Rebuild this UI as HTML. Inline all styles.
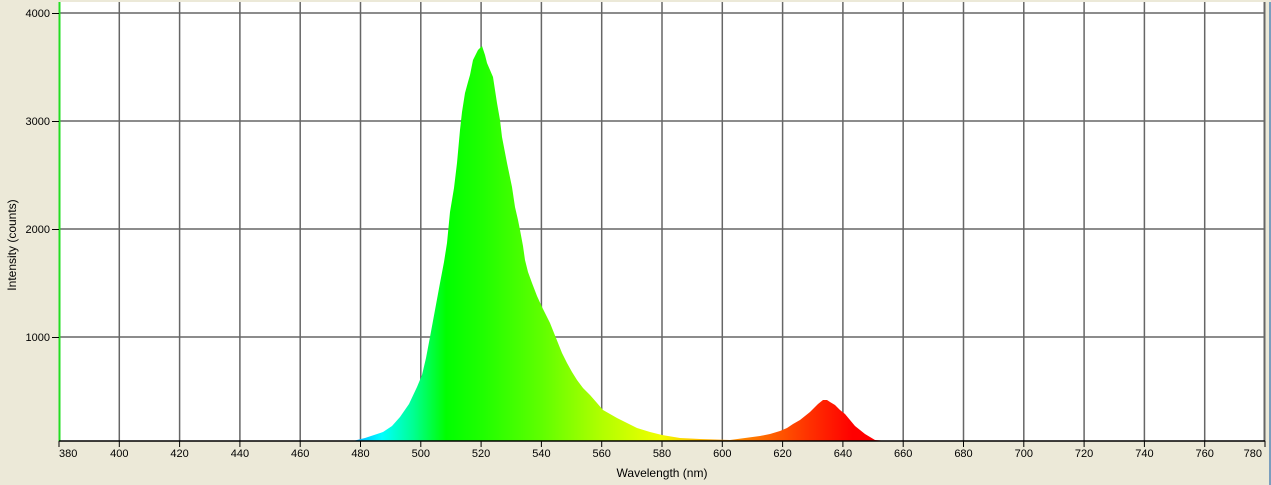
<!DOCTYPE html>
<html><head><meta charset="utf-8"><style>
html,body{margin:0;padding:0;background:#ece9d8;width:1271px;height:485px;overflow:hidden}
</style></head><body>
<svg width="1271" height="485" xmlns="http://www.w3.org/2000/svg" style="position:absolute;left:0;top:0">
<defs>
<linearGradient id="g" gradientUnits="userSpaceOnUse" x1="355" y1="0" x2="890" y2="0">
<stop offset="0" stop-color="#00b0ff"/>
<stop offset="0.05" stop-color="#00ffff"/>
<stop offset="0.11" stop-color="#00ff90"/>
<stop offset="0.17" stop-color="#00ff00"/>
<stop offset="0.24" stop-color="#20ff00"/>
<stop offset="0.35" stop-color="#60ff00"/>
<stop offset="0.46" stop-color="#b0ff00"/>
<stop offset="0.57" stop-color="#f0ff00"/>
<stop offset="0.64" stop-color="#ffc000"/>
<stop offset="0.73" stop-color="#ff8000"/>
<stop offset="0.85" stop-color="#ff3000"/>
<stop offset="0.93" stop-color="#ff0000"/>
<stop offset="1" stop-color="#ff0000"/>
</linearGradient>
</defs>
<rect x="59" y="2" width="1206" height="439" fill="#fff"/>
<g stroke="#666" stroke-width="1.5">
<line x1="59" y1="13" x2="1265" y2="13"/>
<line x1="59" y1="121" x2="1265" y2="121"/>
<line x1="59" y1="229" x2="1265" y2="229"/>
<line x1="59" y1="337" x2="1265" y2="337"/>
</g>
<g stroke="#666" stroke-width="1.5" id="vg"></g>
<polygon fill="url(#g)" points="353,441 365,438 383,432 392,426 400,417 409,404 417,387 422,375 426,358 430,337 435,310 440,283 444,262 447,243 450,212 454,188 457,163 460,130 462,112 465,93 468,82 470,75 473,60 476,54 478,50 482,46 485,55 487,63 490,70 493,77 495,90 497,103 500,120 502,137 507,163 512,187 515,207 518,220 520,230 523,246 525,260 528,272 532,283 537,296 542,307 546,315 550,323 554,333 558,343 562,353 567,363 572,372 577,380 583,388 590,395 597,403 603,410 610,414 617,418 627,423 637,428 650,432 662,435 680,438 700,439 730,440 745,438 760,436 770,434 780,431 787,428 793,424 800,420 805,416 810,412 814,408 818,404 823,400 827,400 830,402 835,405 840,410 845,414 850,420 855,426 860,430 865,434 870,437 875,440 887,441"/>
<line x1="59.5" y1="2" x2="59.5" y2="441" stroke="#22dd22" stroke-width="2"/>
<line x1="1264.5" y1="2" x2="1264.5" y2="441" stroke="#666" stroke-width="2"/>
<line x1="59" y1="441" x2="1265" y2="441" stroke="#000" stroke-width="1.5"/>
<g stroke="#000" stroke-width="1">
<line x1="52" y1="13.5" x2="59" y2="13.5"/>
<line x1="52" y1="121.5" x2="59" y2="121.5"/>
<line x1="52" y1="229.5" x2="59" y2="229.5"/>
<line x1="52" y1="337.5" x2="59" y2="337.5"/>
</g>
<g font-family="Liberation Sans, sans-serif" font-size="11" fill="#000" text-anchor="end">
<text x="50" y="17">4000</text>
<text x="50" y="125">3000</text>
<text x="50" y="233">2000</text>
<text x="50" y="341">1000</text>
</g>
<g id="xl" font-family="Liberation Sans, sans-serif" font-size="11" fill="#000"></g>
<text x="662" y="477" font-family="Liberation Sans, sans-serif" font-size="12" text-anchor="middle">Wavelength (nm)</text>
<text transform="translate(16,245) rotate(-90)" font-family="Liberation Sans, sans-serif" font-size="12" text-anchor="middle">Intensity (counts)</text>
<rect x="1269" y="0" width="2" height="485" fill="#7a9ebe"/>
<rect x="0" y="0" width="1271" height="2" fill="#ece9d8"/>
</svg>
<script>
var vg=document.getElementById('vg'),xl=document.getElementById('xl'),ns='http://www.w3.org/2000/svg';
for(var k=0;k<=20;k++){var x=59+k*60.3,lbl=380+k*20;
if(k>0&&k<20){var l=document.createElementNS(ns,'line');l.setAttribute('x1',x);l.setAttribute('x2',x);l.setAttribute('y1',2);l.setAttribute('y2',441);vg.appendChild(l);}
var t=document.createElementNS(ns,'line');t.setAttribute('x1',x);t.setAttribute('x2',x);t.setAttribute('y1',441);t.setAttribute('y2',447);t.setAttribute('stroke','#000');document.querySelector('svg').appendChild(t);
var tx=document.createElementNS(ns,'text');
if(k==0){tx.setAttribute('x',x);tx.setAttribute('text-anchor','start');}
else if(k==20){tx.setAttribute('x',x-3);tx.setAttribute('text-anchor','end');}
else{tx.setAttribute('x',x);tx.setAttribute('text-anchor','middle');}
tx.setAttribute('y',457);tx.textContent=lbl;xl.appendChild(tx);}
</script>
</body></html>
